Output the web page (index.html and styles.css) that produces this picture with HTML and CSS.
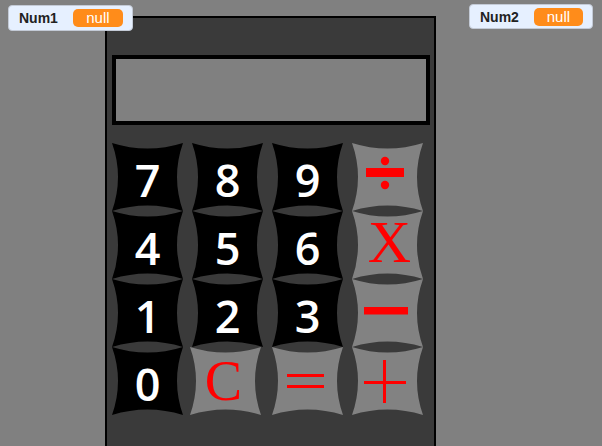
FILE: index.html
```html
<!DOCTYPE html>
<html>
<head>
<meta charset="utf-8">
<link rel="stylesheet" href="styles.css">
</head>
<body>
<div class="stage">
  <div class="calc">
    <div class="display"></div>
    <div class="keys">
      <div class="key num">7</div>
      <div class="key num">8</div>
      <div class="key num">9</div>
      <div class="key op op-div">
        <svg width="71" height="68" viewBox="0 0 71 68"><circle cx="33" cy="18" r="4.2" fill="#f00"/><rect x="14" y="25" width="38" height="9" fill="#f00"/><circle cx="33" cy="42" r="4.2" fill="#f00"/></svg>
      </div>
      <div class="key num">4</div>
      <div class="key num">5</div>
      <div class="key num">6</div>
      <div class="key op"><span class="serif x">X</span></div>
      <div class="key num">1</div>
      <div class="key num">2</div>
      <div class="key num">3</div>
      <div class="key op">
        <svg width="71" height="68" viewBox="0 0 71 68"><rect x="12" y="28" width="44" height="7.5" fill="#f00"/></svg>
      </div>
      <div class="key num">0</div>
      <div class="key op op-c"><span class="serif c">C</span></div>
      <div class="key op">
        <svg width="71" height="68" viewBox="0 0 71 68"><rect x="15" y="27" width="37" height="3" fill="#f00"/><rect x="15" y="38" width="37" height="3" fill="#f00"/></svg>
      </div>
      <div class="key op">
        <svg width="71" height="68" viewBox="0 0 71 68"><rect x="12" y="34" width="42" height="3" fill="#f00"/><rect x="31" y="13" width="3" height="43" fill="#f00"/></svg>
      </div>
    </div>
  </div>
  <div class="monitor mon1"><span class="label">Num1</span><span class="value">null</span></div>
  <div class="monitor mon2"><span class="label">Num2</span><span class="value">null</span></div>
</div>
</body>
</html>
```

FILE: styles.css
```css
html, body {
  margin: 0;
  padding: 0;
}
body {
  width: 602px;
  height: 446px;
  overflow: hidden;
  background: #808080;
}
.stage {
  position: relative;
  width: 602px;
  height: 446px;
  overflow: hidden;
  background: #808080;
  padding-top: 16px;
  box-sizing: border-box;
}
.calc {
  margin-left: 105px;
  width: 331px;
  height: 460px;
  box-sizing: border-box;
  border: 2px solid #000;
  background: #3a3a3a;
  padding: 37px 0 0 5px;
}
.display {
  width: 318px;
  height: 70px;
  box-sizing: border-box;
  border: 4px solid #000;
  background: #808080;
}
.keys {
  margin-top: 18px;
  display: grid;
  grid-template-columns: repeat(4, 71px);
  grid-auto-rows: 68px;
  column-gap: 9px;
}
.key {
  width: 71px;
  height: 68px;
  display: flex;
  align-items: center;
  justify-content: center;
  clip-path: path('M0 0 Q35.5 11 71 0 Q59 34 71 68 Q35.5 57 0 68 Q12 34 0 0 Z');
}
.key svg {
  display: block;
}
.num {
  background: #000;
  color: #fff;
  font-family: "Open Sans", "Noto Sans", sans-serif;
  font-weight: 600;
  font-size: 45px;
  line-height: 1;
  padding-top: 4px;
  box-sizing: border-box;
}
.op {
  background: #828282;
}
.op-c {
  margin-left: -2px;
}
.serif {
  font-family: "Liberation Serif", "Times New Roman", serif;
  color: #f00;
  line-height: 1;
}
.x {
  font-size: 60px;
  margin-left: 4px;
  margin-top: -6px;
}
.c {
  font-size: 56px;
  margin-right: 4px;
}
.monitor {
  position: absolute;
  display: flex;
  align-items: center;
  box-sizing: border-box;
  background: #e6f0ff;
  border: 1px solid #c3cad6;
  border-radius: 4px;
  padding: 0 9px 0 10px;
  font-family: "Liberation Sans", Arial, sans-serif;
}
.mon1 {
  left: 8px;
  top: 5px;
  width: 125px;
  height: 26px;
}
.mon2 {
  left: 469px;
  top: 4px;
  width: 124px;
  height: 25px;
}
.label {
  font-size: 14px;
  font-weight: bold;
  color: #222;
  margin-right: 15px;
}
.value {
  width: 50px;
  height: 18px;
  border-radius: 5px;
  background: #ff8c1a;
  color: #fff;
  font-size: 15px;
  line-height: 18px;
  text-align: center;
}
```
